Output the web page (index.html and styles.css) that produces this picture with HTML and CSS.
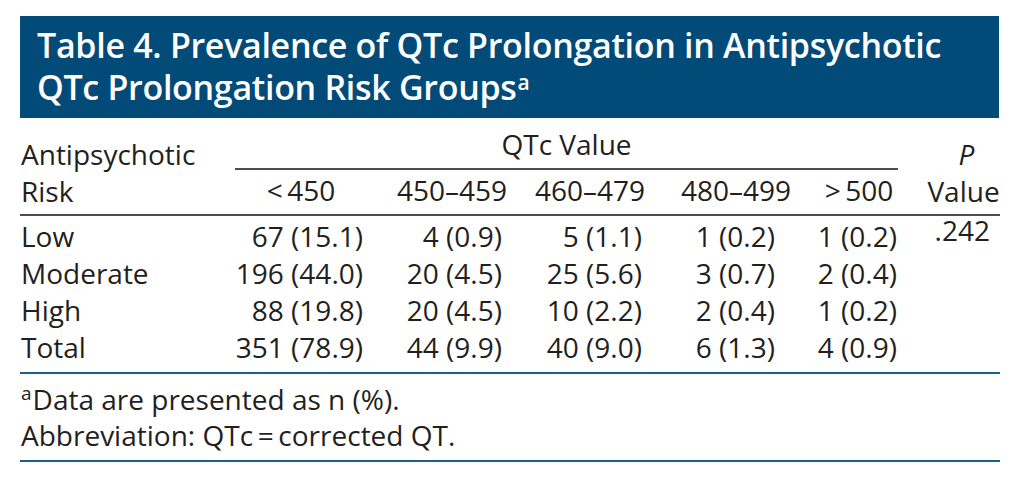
FILE: index.html
```html
<!DOCTYPE html>
<html lang="en">
<head>
<meta charset="utf-8">
<title>Table 4</title>
<link rel="stylesheet" href="styles.css">
</head>
<body>
<div class="page">
  <div class="title">Table 4. Prevalence of QTc Prolongation in Antipsychotic<br>QTc Prolongation Risk Groups<sup class="title-sup">a</sup></div>
  <div class="thead">
    <div class="risk-head">Antipsychotic<br>Risk</div>
    <div class="span-head">QTc Value</div>
    <div class="p-head"><i>P</i><br>Value</div>
    <div class="ch c1">&lt;&#8201;450</div>
    <div class="ch c2">450–459</div>
    <div class="ch c3">460–479</div>
    <div class="ch c4">480–499</div>
    <div class="ch c5">&gt;&#8201;500</div>
  </div>
  <div class="tbody">
    <div class="lab">Low</div><div class="d c1">67 (15.1)</div><div class="d c2">4 (0.9)</div><div class="d c3">5 (1.1)</div><div class="d c4">1 (0.2)</div><div class="d c5">1 (0.2)</div><div class="pv">.242</div>
    <div class="lab">Moderate</div><div class="d c1">196 (44.0)</div><div class="d c2">20 (4.5)</div><div class="d c3">25 (5.6)</div><div class="d c4">3 (0.7)</div><div class="d c5">2 (0.4)</div><div class="pv"></div>
    <div class="lab">High</div><div class="d c1">88 (19.8)</div><div class="d c2">20 (4.5)</div><div class="d c3">10 (2.2)</div><div class="d c4">2 (0.4)</div><div class="d c5">1 (0.2)</div><div class="pv"></div>
    <div class="lab">Total</div><div class="d c1">351 (78.9)</div><div class="d c2">44 (9.9)</div><div class="d c3">40 (9.0)</div><div class="d c4">6 (1.3)</div><div class="d c5">4 (0.9)</div><div class="pv"></div>
  </div>
  <div class="foot">
    <div><sup class="fn-sup">a</sup>Data are presented as n (%).</div>
    <div>Abbreviation: QTc&#8201;=&#8201;corrected QT.</div>
  </div>
</div>
</body>
</html>
```
FILE: styles.css
```css
html, body {
  margin: 0;
  padding: 0;
  background: #ffffff;
}
.page {
  width: 980px;
  margin-left: 20px;
  padding-top: 16px;
  font-family: "Open Sans", "Liberation Sans", sans-serif;
  color: #231f20;
}
.title {
  box-sizing: border-box;
  width: 979px;
  height: 102px;
  background: #024a78;
  color: #ffffff;
  font-weight: 600;
  font-size: 34px;
  line-height: 42px;
  padding: 8px 0 0 17px;
  letter-spacing: -0.3px;
}
.title-sup {
  font-size: 21px;
  line-height: 0;
  vertical-align: 10px;
  margin-left: 1px;
}
.thead, .tbody {
  display: grid;
  grid-template-columns: 215px 140px 145px 140px 145px 100px 95px;
  font-size: 28px;
  line-height: 37px;
}
.thead {
  margin-top: 10px;
  grid-template-rows: 42px 44px;
  border-bottom: 2px solid #4d4d4d;
}
.risk-head {
  grid-column: 1;
  grid-row: 1 / 3;
  align-self: end;
  padding-left: 1px;
  padding-bottom: 4px;
}
.span-head {
  grid-column: 2 / 7;
  grid-row: 1;
  text-align: center;
  margin-right: 7px;
  border-bottom: 2px solid #4d4d4d;
  padding-bottom: 5px;
  align-self: end;
}
.p-head {
  grid-column: 7;
  grid-row: 1 / 3;
  align-self: end;
  text-align: center;
  padding-left: 22px;
  padding-bottom: 4px;
}
.p-head i {
  padding-left: 6px;
}
.ch {
  grid-row: 2;
  text-align: center;
  align-self: center;
  padding-bottom: 4px;
}
.ch.c1 { grid-column: 2; padding-right: 8px; }
.ch.c2 { grid-column: 3; padding-left: 9px; }
.ch.c3 { grid-column: 4; }
.ch.c4 { grid-column: 5; padding-left: 7px; }
.ch.c5 { grid-column: 6; padding-left: 8px; }
.tbody {
  padding: 2px 0 6px;
  border-bottom: 2px solid #17608f;
}
.lab { padding-left: 1px; }
.d { text-align: right; }
.d.c1 { padding-right: 12px; }
.d.c2 { padding-right: 18px; }
.d.c3 { padding-right: 18px; }
.d.c4 { padding-right: 30px; }
.d.c5 { padding-right: 8px; }
.pv {
  text-align: right;
  padding-right: 10px;
  margin-top: -6px;
}
.foot {
  font-size: 28px;
  line-height: 36px;
  padding: 7px 0 7px 1px;
  border-bottom: 2px solid #17608f;
}
.fn-sup {
  font-size: 19px;
  line-height: 0;
  vertical-align: 10px;
  margin-right: 1px;
}
```
